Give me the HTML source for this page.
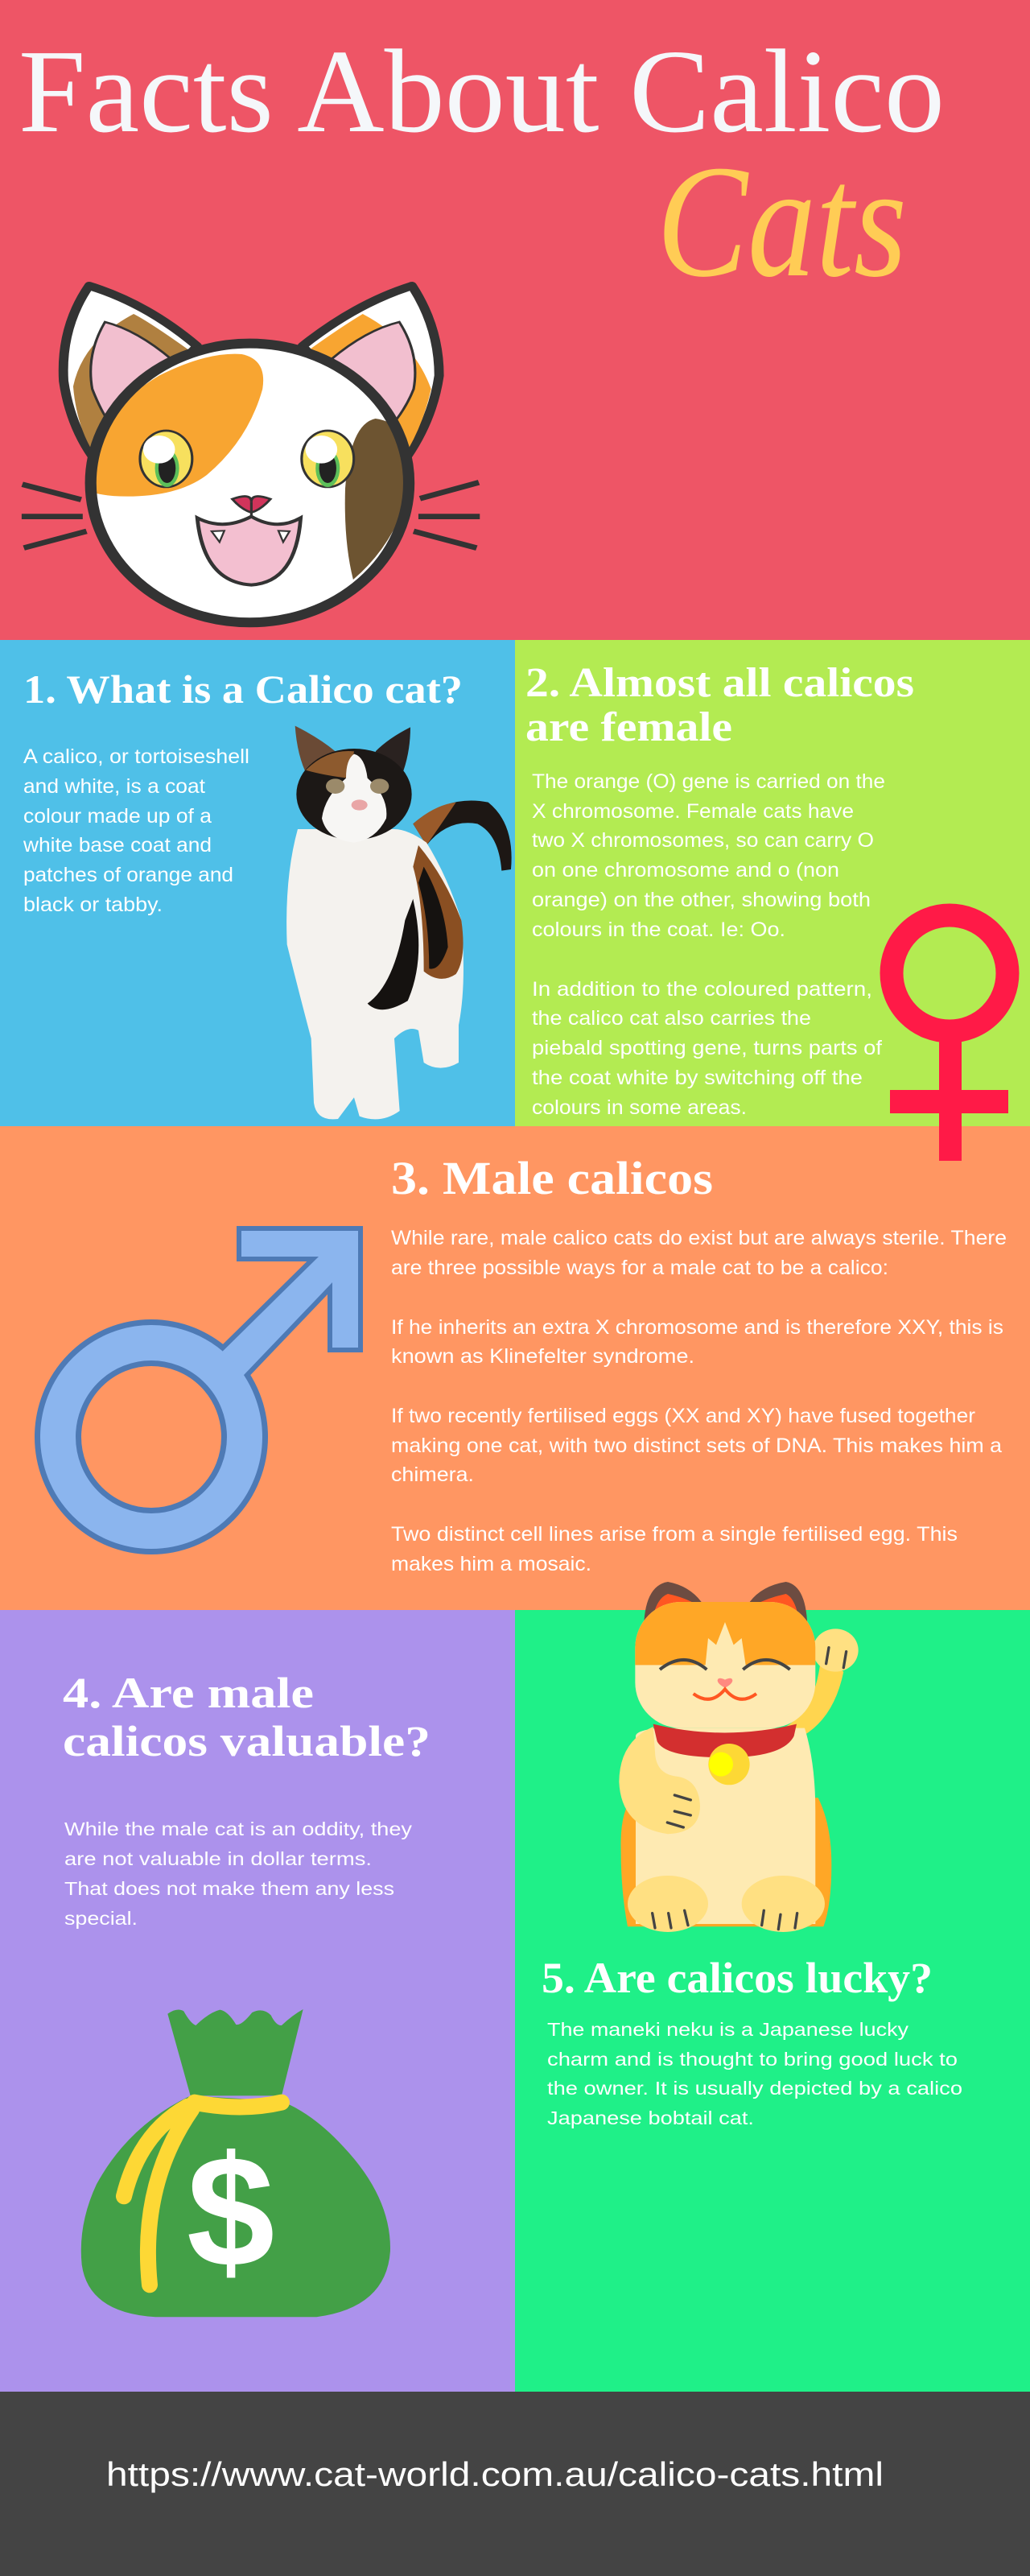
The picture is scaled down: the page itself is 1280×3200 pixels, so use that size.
<!DOCTYPE html>
<html><head><meta charset="utf-8">
<style>
html,body{margin:0;padding:0;}
body{width:1280px;height:3200px;position:relative;overflow:hidden;background:#444;}
svg{position:absolute;left:0;top:0;display:block;}
.h{font-family:"Liberation Serif",serif;font-weight:bold;fill:#fff;}
.b{font-family:"Liberation Sans Narrow","Liberation Sans",sans-serif;font-size:25px;fill:#fff;}
.c{font-family:"Liberation Sans",sans-serif;font-size:23px;fill:#fff;}
</style></head>
<body>
<svg width="1280" height="3200" viewBox="0 0 1280 3200" xmlns="http://www.w3.org/2000/svg">
<!-- backgrounds -->
<rect x="0" y="0" width="1280" height="795" fill="#EE5566"/>
<rect x="0" y="795" width="640" height="604" fill="#4FC0E8"/>
<rect x="640" y="795" width="640" height="604" fill="#B3EB52"/>
<rect x="0" y="1399" width="1280" height="601" fill="#FF9662"/>
<rect x="0" y="2000" width="640" height="971" fill="#AC92EC"/>
<rect x="640" y="2000" width="640" height="971" fill="#1FF088"/>
<rect x="0" y="2971" width="1280" height="229" fill="#444444"/>

<!-- title -->
<text x="23" y="163" font-family="Liberation Serif,serif" font-size="148" fill="#F5F7FA" textLength="1151" lengthAdjust="spacingAndGlyphs">Facts About Calico</text>
<text x="816" y="342" font-family="Liberation Serif,serif" font-style="italic" font-size="200" fill="#FFCC55" textLength="311" lengthAdjust="spacingAndGlyphs">Cats</text>

<!-- header cat face -->
<g transform="translate(0,340) scale(0.3954,0.3333)">
  <path d="M620,270 Q460,110 280,45 Q190,200 200,400 Q220,560 290,680 Z" fill="#fff" stroke="#333" stroke-width="30" stroke-linejoin="round"/>
  <path d="M600,290 Q470,180 420,150 Q260,250 230,420 Q240,560 290,660 Z" fill="#B08040"/>
  <path d="M540,320 Q430,210 330,180 Q270,300 290,430 Q310,490 330,530 Z" fill="#F2BFCF" stroke="#333" stroke-width="8"/>
  <path d="M950,270 Q1120,110 1295,45 Q1380,200 1380,380 Q1360,540 1280,680 Z" fill="#fff" stroke="#333" stroke-width="30" stroke-linejoin="round"/>
  <path d="M970,285 Q1070,200 1140,150 Q1300,250 1355,430 Q1330,560 1280,660 Z" fill="#F8A531"/>
  <path d="M1040,320 Q1150,210 1255,180 Q1320,300 1300,430 Q1280,490 1245,545 Z" fill="#F2BFCF" stroke="#333" stroke-width="8"/>
  <clipPath id="fc"><ellipse cx="785" cy="780" rx="500" ry="520"/></clipPath>
  <ellipse cx="785" cy="780" rx="500" ry="520" fill="#fff"/>
  <g clip-path="url(#fc)">
    <path d="M250,700 Q330,500 500,380 Q650,290 760,300 Q840,320 825,430 Q780,620 650,750 Q560,830 400,830 Q250,830 250,760 Z" fill="#F8A531"/>
    <path d="M1180,540 Q1300,560 1300,760 Q1250,1000 1110,1140 Q1080,1000 1085,800 Q1100,560 1180,540 Z" fill="#6D5431"/>
  </g>
  <ellipse cx="785" cy="780" rx="500" ry="520" fill="none" stroke="#333" stroke-width="36"/>
  <ellipse cx="522" cy="690" rx="82" ry="105" fill="#F7E05E" stroke="#333" stroke-width="8"/>
  <ellipse cx="525" cy="725" rx="38" ry="70" fill="#5CBF5A"/>
  <ellipse cx="525" cy="725" rx="27" ry="55" fill="#222"/>
  <ellipse cx="500" cy="655" rx="50" ry="52" fill="#fff"/>
  <ellipse cx="1030" cy="690" rx="82" ry="105" fill="#F7E05E" stroke="#333" stroke-width="8"/>
  <ellipse cx="1030" cy="725" rx="38" ry="70" fill="#5CBF5A"/>
  <ellipse cx="1030" cy="725" rx="27" ry="55" fill="#222"/>
  <ellipse cx="1010" cy="655" rx="50" ry="52" fill="#fff"/>
  <path d="M730,840 Q790,815 790,850 Q790,815 850,840 Q820,880 790,890 Q760,880 730,840 Z" fill="#D1345B" stroke="#333" stroke-width="8"/>
  <path d="M620,910 Q700,960 790,905 Q870,960 945,910 Q930,1150 790,1160 Q640,1150 620,910 Z" fill="#F3BFD0" stroke="#333" stroke-width="12"/>
  <path d="M665,960 L690,1000 L705,958 Z M875,958 L890,1000 L910,960 Z" fill="#fff" stroke="#333" stroke-width="6"/>
  <path d="M790,850 L790,905" stroke="#333" stroke-width="8"/>
  <g stroke="#333" stroke-width="20">
    <line x1="70" y1="785" x2="255" y2="842"/><line x1="68" y1="905" x2="260" y2="905"/><line x1="75" y1="1022" x2="272" y2="960"/>
    <line x1="1320" y1="838" x2="1505" y2="778"/><line x1="1315" y1="905" x2="1508" y2="905"/><line x1="1300" y1="960" x2="1498" y2="1022"/>
  </g>
</g>

<!-- section 1 -->
<text class="h" x="29" y="873" font-size="50" textLength="546" lengthAdjust="spacingAndGlyphs">1. What is a Calico cat?</text>
<text class="b" x="29" y="948" textLength="281" lengthAdjust="spacingAndGlyphs">A calico, or tortoiseshell</text>
<text class="b" x="29" y="985" textLength="226" lengthAdjust="spacingAndGlyphs">and white, is a coat</text>
<text class="b" x="29" y="1022" textLength="234" lengthAdjust="spacingAndGlyphs">colour made up of a</text>
<text class="b" x="29" y="1058" textLength="234" lengthAdjust="spacingAndGlyphs">white base coat and</text>
<text class="b" x="29" y="1095" textLength="261" lengthAdjust="spacingAndGlyphs">patches of orange and</text>
<text class="b" x="29" y="1132" textLength="173" lengthAdjust="spacingAndGlyphs">black or tabby.</text>

<!-- cat photo approx -->
<g transform="translate(340,890) scale(0.3333)">
  <path d="M520,400 Q650,290 800,320 Q900,400 885,570 L850,575 Q840,440 760,400 Q650,380 570,480 Z" fill="#1d1714"/>
  <path d="M520,400 Q600,330 680,320 Q640,380 570,480 Z" fill="#9a5a2a"/>
  <path d="M90,420 Q40,600 50,850 Q100,1050 140,1200 L150,1440 Q160,1510 240,1500 L300,1420 L320,1490 Q400,1520 470,1470 L450,1200 Q500,1150 540,1170 L560,1290 Q620,1330 690,1290 L690,1150 Q720,1000 700,760 Q650,600 570,470 Q500,420 450,420 Z" fill="#f4f2ee"/>
  <path d="M540,480 Q640,600 700,760 Q720,900 680,960 Q620,1000 560,950 Q560,700 520,560 Z" fill="#8a4f22"/>
  <path d="M520,680 Q570,900 500,1060 Q400,1120 350,1070 Q450,1000 490,760 Z" fill="#151210"/>
  <path d="M560,560 Q640,700 650,860 Q620,950 580,940 Q580,760 540,620 Z" fill="#151210"/>
  <path d="M80,35 Q170,80 230,130 L150,260 Q90,180 80,35 Z" fill="#6a4a35"/>
  <path d="M510,40 Q430,80 380,130 L460,260 Q510,160 510,40 Z" fill="#2a2220"/>
  <ellipse cx="300" cy="290" rx="215" ry="170" fill="#1c1816"/>
  <path d="M120,200 Q200,120 300,130 L280,230 Q190,220 120,200 Z" fill="#8d5a2e"/>
  <path d="M300,140 Q340,150 350,230 Q430,300 420,380 Q380,460 300,470 Q200,460 180,380 Q190,300 270,230 Q270,160 300,140 Z" fill="#f7f6f4"/>
  <ellipse cx="230" cy="260" rx="35" ry="28" fill="#9b8a6a"/>
  <ellipse cx="395" cy="260" rx="35" ry="28" fill="#9b8a6a"/>
  <ellipse cx="320" cy="330" rx="30" ry="20" fill="#e9a6a6"/>
</g>

<!-- section 2 -->
<text class="h" x="653" y="865" font-size="52" textLength="483" lengthAdjust="spacingAndGlyphs">2. Almost all calicos</text>
<text class="h" x="653" y="920" font-size="52" textLength="257" lengthAdjust="spacingAndGlyphs">are female</text>
<text class="b" x="661" y="979" textLength="439" lengthAdjust="spacingAndGlyphs">The orange (O) gene is carried on the</text>
<text class="b" x="661" y="1016" textLength="400" lengthAdjust="spacingAndGlyphs">X chromosome. Female cats have</text>
<text class="b" x="661" y="1052" textLength="425" lengthAdjust="spacingAndGlyphs">two X chromosomes, so can carry O</text>
<text class="b" x="661" y="1089" textLength="382" lengthAdjust="spacingAndGlyphs">on one chromosome and o (non</text>
<text class="b" x="661" y="1126" textLength="421" lengthAdjust="spacingAndGlyphs">orange) on the other, showing both</text>
<text class="b" x="661" y="1163" textLength="315" lengthAdjust="spacingAndGlyphs">colours in the coat.  Ie: Oo.</text>
<text class="b" x="661" y="1237" textLength="423" lengthAdjust="spacingAndGlyphs">In addition to the coloured pattern,</text>
<text class="b" x="661" y="1273" textLength="347" lengthAdjust="spacingAndGlyphs">the calico cat also carries the</text>
<text class="b" x="661" y="1310" textLength="435" lengthAdjust="spacingAndGlyphs">piebald spotting gene, turns parts of</text>
<text class="b" x="661" y="1347" textLength="411" lengthAdjust="spacingAndGlyphs">the coat white by switching off the</text>
<text class="b" x="661" y="1384" textLength="267" lengthAdjust="spacingAndGlyphs">colours in some areas.</text>

<!-- female symbol -->
<g fill="#FF1A47">
  <ellipse cx="1180" cy="1209" rx="72" ry="72" fill="none" stroke="#FF1A47" stroke-width="29"/>
  <rect x="1167" y="1278" width="28" height="164"/>
  <rect x="1106" y="1354" width="147" height="29"/>
</g>

<!-- section 3 -->
<text class="h" x="486" y="1483" font-size="58" textLength="400" lengthAdjust="spacingAndGlyphs">3. Male calicos</text>
<text class="b" x="486" y="1546" textLength="765" lengthAdjust="spacingAndGlyphs">While rare, male calico cats do exist but are always sterile. There</text>
<text class="b" x="486" y="1583" textLength="618" lengthAdjust="spacingAndGlyphs">are three possible ways for a male cat to be a calico:</text>
<text class="b" x="486" y="1657" textLength="761" lengthAdjust="spacingAndGlyphs">If he inherits an extra X chromosome and is therefore XXY, this is</text>
<text class="b" x="486" y="1693" textLength="377" lengthAdjust="spacingAndGlyphs">known as Klinefelter syndrome.</text>
<text class="b" x="486" y="1767" textLength="726" lengthAdjust="spacingAndGlyphs">If two recently fertilised eggs (XX and XY) have fused together</text>
<text class="b" x="486" y="1804" textLength="759" lengthAdjust="spacingAndGlyphs">making one cat, with two distinct sets of DNA. This makes him a</text>
<text class="b" x="486" y="1840" textLength="103" lengthAdjust="spacingAndGlyphs">chimera.</text>
<text class="b" x="486" y="1914" textLength="704" lengthAdjust="spacingAndGlyphs">Two distinct cell lines arise from a single fertilised egg. This</text>
<text class="b" x="486" y="1951" textLength="249" lengthAdjust="spacingAndGlyphs">makes him a mosaic.</text>

<!-- male symbol -->
<g>
  <polygon points="300,1529 445,1529 445,1674 413,1674 413,1593 282,1730 255,1700 396,1561 300,1561" fill="#4E7AB5" stroke="#4E7AB5" stroke-width="12" stroke-linejoin="miter"/>
  <ellipse cx="188" cy="1785" rx="116" ry="117" fill="none" stroke="#4E7AB5" stroke-width="58"/>
  <polygon points="300,1529 445,1529 445,1674 413,1674 413,1593 282,1730 255,1700 396,1561 300,1561" fill="#8BB5EE"/>
  <ellipse cx="188" cy="1785" rx="116" ry="117" fill="none" stroke="#8BB5EE" stroke-width="44"/>
</g>

<!-- section 4 -->
<text class="h" x="78" y="2121" font-size="54" textLength="312" lengthAdjust="spacingAndGlyphs">4. Are male</text>
<text class="h" x="78" y="2181" font-size="54" textLength="457" lengthAdjust="spacingAndGlyphs">calicos valuable?</text>
<text class="c" x="80" y="2280" textLength="432" lengthAdjust="spacingAndGlyphs">While the male cat is an oddity, they</text>
<text class="c" x="80" y="2317" textLength="382" lengthAdjust="spacingAndGlyphs">are not valuable in dollar terms.</text>
<text class="c" x="80" y="2354" textLength="410" lengthAdjust="spacingAndGlyphs">That does not make them any less</text>
<text class="c" x="80" y="2391" textLength="91" lengthAdjust="spacingAndGlyphs">special.</text>

<!-- money bag -->
<g transform="translate(60,2480) scale(0.3333)">
  <path d="M445,65 Q480,40 505,55 Q530,100 550,108 Q600,60 640,50 Q670,55 700,105 Q720,110 760,60 Q800,40 830,70 Q850,110 870,108 Q910,70 950,48 L870,370 L530,370 Z" fill="#43A047"/>
  <path d="M530,370 Q300,480 180,700 Q110,850 125,1000 Q150,1180 400,1195 L1000,1195 Q1260,1160 1275,950 Q1280,750 1100,560 Q990,440 870,390 Z" fill="#43A047"/>
  <g fill="none" stroke="#FDD835" stroke-width="60" stroke-linecap="round">
    <path d="M545,395 Q720,430 870,395"/>
    <path d="M520,410 Q340,510 282,745"/>
    <path d="M535,420 Q340,700 378,1075"/>
  </g>
  <text x="680" y="1005" text-anchor="middle" font-family="Liberation Sans,sans-serif" font-weight="bold" font-size="590" fill="#fff">$</text>
</g>

<!-- maneki neko -->
<g transform="translate(740,1950) scale(0.3333)">
  <path d="M180,250 Q175,60 270,45 Q350,60 395,120 Z" fill="#6D4C41"/>
  <path d="M205,240 Q215,110 270,90 Q340,105 385,135 Z" fill="#FF5722"/>
  <path d="M790,250 Q795,60 710,45 Q620,60 575,120 Z" fill="#6D4C41"/>
  <path d="M765,240 Q755,110 710,90 Q640,105 585,135 Z" fill="#FF5722"/>
  <path d="M95,1050 Q90,900 140,850 L830,850 Q880,950 880,1100 Q880,1250 850,1330 L120,1330 Q95,1200 95,1050 Z" fill="#FFA726"/>
  <path d="M700,650 Q880,600 925,380 L840,330 Q820,540 680,600 Z" fill="#FFD54F"/>
  <ellipse cx="895" cy="300" rx="85" ry="80" fill="#FFE082"/>
  <path d="M150,620 Q150,600 230,590 L780,590 Q820,720 820,900 L820,1320 L150,1320 Z" fill="#FEEAB2"/>
  <clipPath id="hc"><rect x="148" y="120" width="672" height="470" rx="170"/></clipPath>
  <rect x="148" y="120" width="672" height="470" rx="170" fill="#FEEAB2"/>
  <g clip-path="url(#hc)">
    <path d="M100,355 L100,100 L870,100 L870,355 L560,355 L545,255 L515,280 L483,195 L450,280 L420,255 L410,355 Z" fill="#FFA726"/>
  </g>
  <path d="M240,372 Q330,300 415,372 M550,372 Q635,300 725,372" fill="none" stroke="#444" stroke-width="12"/>
  <path d="M483,440 Q455,425 455,412 Q458,398 483,410 Q508,398 511,412 Q511,425 483,440 Z" fill="#FF8A80"/>
  <path d="M365,462 Q430,510 483,445 Q535,510 600,462" fill="none" stroke="#FF5722" stroke-width="12"/>
  <path d="M215,575 Q480,640 750,575 L740,620 Q700,700 480,700 Q260,700 230,640 Z" fill="#D32F2F"/>
  <circle cx="498" cy="725" r="77" fill="#FDD835"/>
  <circle cx="468" cy="725" r="45" fill="#FFFF00"/>
  <path d="M215,585 Q90,640 88,790 Q95,960 270,985 Q390,980 390,880 Q385,780 300,770 Q225,760 222,680 Z" fill="#FFE082"/>
  <ellipse cx="270" cy="1245" rx="150" ry="105" fill="#FFE082"/>
  <ellipse cx="700" cy="1245" rx="155" ry="105" fill="#FFE082"/>
  <g stroke="#444" stroke-width="10" stroke-linecap="round" fill="none">
    <path d="M295,840 L355,858 M295,900 L355,915 M268,942 L328,960"/>
    <path d="M870,290 L860,350 M935,305 L925,365"/>
    <path d="M212,1280 L222,1335 M272,1280 L282,1335 M332,1270 L345,1325"/>
    <path d="M628,1270 L620,1325 M690,1285 L682,1340 M752,1280 L744,1335"/>
  </g>
</g>

<!-- section 5 -->
<text class="h" x="673" y="2475" font-size="54" textLength="486" lengthAdjust="spacingAndGlyphs">5. Are calicos lucky?</text>
<text class="c" x="680" y="2529" textLength="449" lengthAdjust="spacingAndGlyphs">The maneki neku is a Japanese  lucky</text>
<text class="c" x="680" y="2566" textLength="510" lengthAdjust="spacingAndGlyphs">charm and is thought to bring good luck to</text>
<text class="c" x="680" y="2602" textLength="516" lengthAdjust="spacingAndGlyphs">the owner.  It is usually depicted by a calico</text>
<text class="c" x="680" y="2639" textLength="257" lengthAdjust="spacingAndGlyphs">Japanese bobtail cat.</text>

<!-- footer -->
<text x="132" y="3088" font-family="Liberation Sans,sans-serif" font-size="42" fill="#fff" textLength="966" lengthAdjust="spacingAndGlyphs">https://www.cat-world.com.au/calico-cats.html</text>
</svg>
</body></html>
